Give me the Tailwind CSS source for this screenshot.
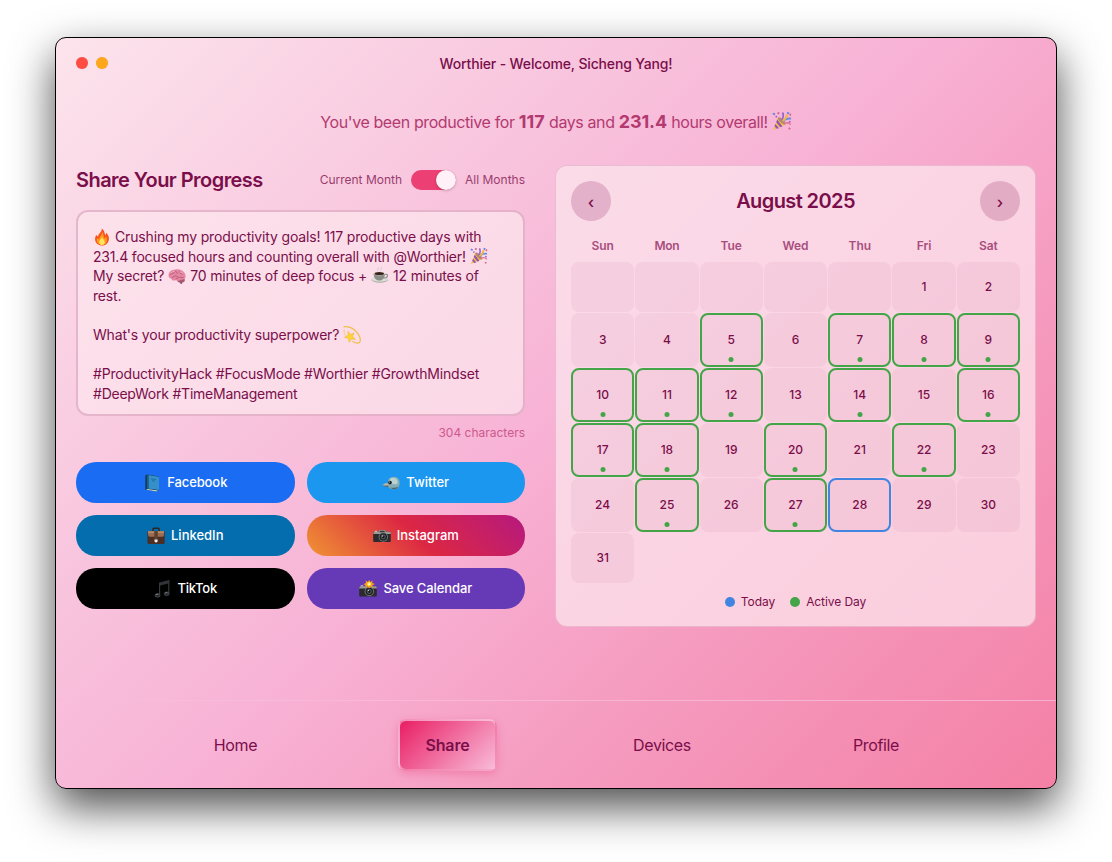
<!DOCTYPE html>
<html lang="en">
<head>
<meta charset="utf-8">
<title>Worthier</title>
<script src="https://cdn.jsdelivr.net/npm/@tailwindcss/browser@4"></script>
</head>
<body class="h-[862px] w-[1112px] overflow-hidden bg-white px-[55px] pt-[37px] font-['Inter',sans-serif] text-[#7a0e4a]">
<svg class="hidden">
  <symbol id="party" viewBox="0 0 20 20">
    <path d="M1 19 6 6.5Q11 8 13.5 13.5Z" fill="#f6bd42"/>
    <path d="M3.4 13 7 17.2 4.8 17.8 2.5 15.3ZM5.2 8.6 10.4 15.4 8.4 16.3 4.2 11.2Z" fill="#9252bd"/>
    <ellipse cx="9.8" cy="10" rx="1.9" ry="5" transform="rotate(-46 9.8 10)" fill="#b98a6a"/>
    <path d="M9.5 9.5Q12.5 5.5 10.5 1.5" stroke="#9465d0" stroke-width="1.8" fill="none"/>
    <path d="M11 10.5Q13 7 19 7.5" stroke="#5f8de8" stroke-width="1.9" fill="none"/>
    <path d="M10.5 9.8Q15 7.5 14.8 3.5" stroke="#f0b73a" stroke-width="1.9" fill="none"/>
    <path d="M12.5 12.3Q16 10.8 18.8 13.5" stroke="#e5739c" stroke-width="1.5" fill="none"/>
    <path d="M1 1.7l2.4.8-.7 1.7-2.1-.6zM15.5 .8l2 1-1 1.7-1.8-1z" fill="#5f86e8"/>
    <path d="M6 .8l1.8 1-.8 1.7-1.8-.8zM18 2.3l1.6 1.1-1.2 1.5-1.4-1zM17 16.3l1.7.9-.8 1.5-1.7-.7z" fill="#d9688f"/>
    <path d="M4 4.6l1.4.8-.8 1.4-1.4-.8zM17 9.8l1.8.4-.5 1.5-1.7-.4z" fill="#8b62cf"/>
  </symbol>
  <symbol id="fire" viewBox="0 0 18 18">
    <path d="M8.7.4C12 2.7 11.6 5.7 12.2 7.2 12.8 6.6 13.2 5.5 13 4.6 15.4 7 16.4 9.2 15.8 12 15.1 15.6 12.3 17.6 9 17.6 5.2 17.6 2.4 15.2 2.1 11.8 1.9 9.4 2.8 8 3.4 6.8 3.8 7.8 4.4 8.3 5.2 8.5 4.9 5.4 9.3 4.2 8.7.4Z" fill="#f8521d"/>
    <path d="M9 3.7C11 6 10.2 8.6 11.4 10.2 12.3 9.8 13 9 13 8.2 15 11.8 13.8 16.8 9 17 4.8 16.8 3 13.4 4 10 5 11 6 11 6.6 10.5 6.5 7.8 9.7 6.8 9 3.7Z" fill="#ff9d20"/>
    <path d="M9 9C9.3 11.2 11.8 12 11.8 14.2 11.8 16 10.4 17 9 17S6.3 16 6.3 14.2C6.3 12.2 8.6 11 9 9Z" fill="#ffe45c"/>
  </symbol>
  <symbol id="brain" viewBox="0 0 18 18">
    <path d="M11 13.5 14.3 13 14 17 12.4 16.5Z" fill="#7b4958"/>
    <ellipse cx="13" cy="13" rx="3.8" ry="2.6" fill="#a55870"/>
    <path d="M.6 9C.2 5.4 3.3 2.6 6.6 2.8 10.4 1.3 17.4 3.4 17.6 9.3 17.6 12 15.6 12.9 13 12.8 10 14.8 8.5 13.5 7.4 13.3 4.7 14.2 3.4 12.7 3.4 11.7 1.8 11.6.8 10.4.6 9Z" fill="#e487a3"/>
    <path d="M2.2 8.3Q3.6 5 6.5 6M4 10.8Q7 7.4 9.8 9.6M6 4Q9.5 4.3 9.5 7M11.5 4Q11.3 7 14.5 7.3M7.7 12Q10.5 9.4 15.7 10.5" stroke="#b65473" stroke-width=".8" fill="none"/>
    <path d="M3 6Q5 3.6 7 4.4M11.8 5Q14 5 15 6.3" stroke="#f8b9cb" stroke-width=".7" fill="none"/>
  </symbol>
  <symbol id="coffee" viewBox="0 0 18 18">
    <path d="M7 4.8Q5.8 3.4 7 2.2T7 0M10 4.8Q8.8 3.4 10 2.2T10 0" stroke="#d9c7d0" stroke-width=".9" fill="none"/>
    <ellipse cx="8.8" cy="12.8" rx="8.4" ry="2.9" fill="#a8aba4"/>
    <ellipse cx="8.8" cy="12.3" rx="8.2" ry="2.5" fill="#dcddd7"/>
    <path d="M2.6 6.2H14C14 10.5 12 13.5 8.3 13.5S2.6 10.5 2.6 6.2Z" fill="#8b8e88"/>
    <path d="M14 7.5Q17 6.8 16.5 9T12.5 11" stroke="#939790" stroke-width="1.2" fill="none"/>
    <ellipse cx="8.3" cy="6.3" rx="5.8" ry="2" fill="#e7e8e2"/>
    <ellipse cx="8.3" cy="6.5" rx="4.8" ry="1.6" fill="#3c2119"/>
  </symbol>
  <symbol id="dizzy" viewBox="0 0 18 18">
    <path d="M.5.8Q9-.5 15 7.7 18.7 13.4 16.5 16.6 14 18.2 9.5 15.2" stroke="#efbf45" stroke-width="1.2" fill="none"/>
    <path d="M1 3.5Q.5 8 3.5 11" stroke="#f4cf6c" stroke-width=".9" fill="none"/>
    <path d="M4.9 5.2 7.3 8.2 11.2 7 9.7 10.3 12.6 13.4 8.6 13.1 6.2 16.5 5.4 12.6 1.4 11.4 5 9.4Z" fill="#ffd339" stroke="#e7a82b" stroke-width=".4"/>
  </symbol>
  <symbol id="book" viewBox="0 0 18 18">
    <path d="M2.3 1.5 4.3.6 16 2.6V16L13.6 17.6 2.3 15.8Z" fill="#143b57"/>
    <path d="M4.5 15 15 16.6 13.6 17.4 3 15.8Z" fill="#cad4d7"/>
    <path d="M4.6.9 16 2.8V16L4.6 14.5Z" fill="#3590c9"/>
    <path d="M4.6.9 6 1.1V14.7L4.6 14.5Z" fill="#1c6696"/>
    <path d="M8 4.8 13 5.6M9 6.7 12 7.2" stroke="#19628f" stroke-width=".7"/>
  </symbol>
  <symbol id="bird" viewBox="0 0 18 18">
    <path d="M.3 11.3Q3.5 8 7.3 9.2L7 12.5Q3.5 12.9.3 11.3Z" fill="#b8b6a9"/>
    <path d="M.3 11.3Q4 12 7.2 11.2L7 13Q3 13.2.3 11.3Z" fill="#535b5a"/>
    <path d="M5.8 9Q6 2.7 12 2.8 17.6 3.3 17.7 9 17.5 15.4 11.8 15.5 7.2 15.4 5.8 11.6Z" fill="#86adb5"/>
    <path d="M8 5Q11 2.6 14.5 5 16.5 8 15 10 11 11 8 8.5Z" fill="#b9d1cf"/>
    <circle cx="8" cy="8.6" r="1.8" fill="#131b20"/><circle cx="7.5" cy="8" r=".5" fill="#fff"/>
    <path d="M8.3 13.5Q13 14.6 16.7 12.3 15 15.4 12 15.4 10 15.4 8.3 13.5Z" fill="#4f6b72"/>
  </symbol>
  <symbol id="case" viewBox="0 0 18 18">
    <path d="M6 4.5V2.4Q6 1.3 7.2 1.3H11Q12.2 1.3 12.2 2.4V4.5" stroke="#33231f" stroke-width="1.4" fill="none"/>
    <rect x=".4" y="4" width="17.3" height="13" rx="1.3" fill="#4b2f27"/>
    <path d="M1 4.3H17Q17.6 9.2 15.6 9.8H2.6Q.4 9.2 1 4.3Z" fill="#9a6d52"/>
    <path d="M1 4.3H17L16.8 6H1.1Z" fill="#b98b69"/>
    <path d="M7.3 4H10.8V12.5H7.3Z" fill="#60402f"/>
    <path d="M7.5 12.5H10.6V14.6L9 15.8 7.5 14.6Z" fill="#f1f1e9"/>
  </symbol>
  <symbol id="camera" viewBox="0 0 18 18">
    <path d="M1.5 4.7H5.5L6.4 3H12L13 4.7H17Q17.8 4.7 17.8 5.5V14.2Q17.8 15 17 15H1Q.2 15 .2 14.2V5.8Q.2 4.8 1.5 4.7Z" fill="#2b2b2d"/>
    <path d="M1.3 4.7H5.5L6.4 3H12L13 4.7H17L17.8 5.5V7H.2V5.8Z" fill="#9b9a96"/>
    <path d="M7 3.7H11.4L11.8 5.2H6.5Z" fill="#353535"/>
    <rect x="1.7" y="3.8" width="2.5" height="1" fill="#d3d2cd"/>
    <circle cx="10.3" cy="10" r="4.7" fill="#777a7a"/><circle cx="10.3" cy="10" r="3.8" fill="#202225"/>
    <circle cx="10.3" cy="10" r="2.4" fill="#596063"/><circle cx="10.3" cy="10" r="1.4" fill="#171a1d"/>
    <circle cx="9.5" cy="9" r=".7" fill="#b7c1c6"/>
  </symbol>
  <symbol id="flash" viewBox="0 0 18 18">
    <use href="#camera" y="1.5" width="18" height="18"/>
    <path d="M10.2-.2 11.3 2 13.6.6 13.2 3.1 16 4 13.3 5.2 13.8 7.7 11.4 6.5 10 8.5 8.8 6.5 6.3 7.7 7 5.2 4.3 4.2 7 3 6.6.5 9 2Z" fill="#ff9d17"/>
    <circle cx="10.1" cy="4.1" r="2" fill="#ffe45b"/><circle cx="10.1" cy="4.1" r=".9" fill="#fff"/>
  </symbol>
  <symbol id="note" viewBox="0 0 18 18">
    <path d="M6.6 15V3.2L15.8.8V13.5" stroke="#3a3e42" stroke-width="1.1" fill="none"/>
    <path d="M6.3 2.8 16.2.5V3.3L6.3 5.7Z" fill="#303438"/>
    <ellipse cx="4.5" cy="15.4" rx="2.5" ry="1.8" fill="#272b2f" stroke="#596067" stroke-width=".6"/>
    <ellipse cx="13.7" cy="13.8" rx="2.5" ry="1.8" fill="#272b2f" stroke="#596067" stroke-width=".6"/>
    <path d="M3 14.8Q4 13.8 5.2 14.4M12.2 13.2Q13.3 12.2 14.4 12.8" stroke="#adb4b9" stroke-width=".6" fill="none"/>
  </symbol>
</svg>

<div class="flex h-[752px] w-[1002px] flex-col overflow-hidden rounded-[11px] border border-black bg-[linear-gradient(135deg,#fce4ec_0%,#f8c1dc_35%,#f8b2d5_50%,#f59cc0_70%,#f480a5_100%)] shadow-[0_18px_44px_rgba(0,0,0,0.7)]">
  <header class="flex h-[52px] shrink-0 items-center px-5">
    <div class="flex w-[120px] gap-2 pb-0.5">
      <span class="size-3 rounded-full bg-[#ff4d43] shadow-[0_0_1px_rgba(0,0,0,0.15)]"></span>
      <span class="size-3 rounded-full bg-[#ffa71a] shadow-[0_0_1px_rgba(0,0,0,0.15)]"></span>
    </div>
    <h1 class="flex-1 text-center text-sm font-medium tracking-[-0.15px]">Worthier - Welcome, Sicheng Yang!</h1>
    <div class="w-[120px]"></div>
  </header>

  <p class="mt-[18px] mb-px flex h-[26px] shrink-0 items-center justify-center text-[#b33a70]">
    <span class="text-base tracking-[-0.4px] whitespace-pre">You've been productive for <b class="text-[18px] tracking-[0.1px]">117</b> days and <b class="text-[18px] tracking-[-0.1px]">231.4</b> hours overall!</span>
    <svg class="ml-1 size-5"><use href="#party"/></svg>
  </p>

  <main class="flex h-[565px] shrink-0 gap-[30px] px-5 pt-[30px]">
    <section class="w-[449px]">
      <div class="flex h-[30px] items-center">
        <h2 class="flex-1 text-xl font-semibold tracking-[-0.55px]">Share Your Progress</h2>
        <div class="flex items-center text-xs text-[#9a3d6e]">
          <span>Current Month</span>
          <span class="mx-[9px] flex h-5 w-[45px] justify-end rounded-full bg-[#ec3f74]"><span class="size-5 rounded-full bg-[#fff1f7] shadow-[0_1px_3px_rgba(0,0,0,0.2)]"></span></span>
          <span>All Months</span>
        </div>
      </div>
      <div class="mt-[15px] h-[206px] rounded-xl border-2 border-[#880e4f]/20 bg-[#fce4ec]/75 px-[15px] pt-[15px] text-sm leading-[19.6px] tracking-[-0.18px]">
        <div class="flex h-[19.6px] items-center"><svg class="mr-1 size-[18px]"><use href="#fire"/></svg><span class="tracking-[-0.15px]">Crushing my productivity goals! 117 productive days with</span></div>
        <div class="flex h-[19.6px] items-center"><span>231.4 focused hours and counting overall with @Worthier!</span><svg class="ml-1 size-[18px]"><use href="#party"/></svg></div>
        <div class="flex h-[19.6px] items-center"><span>My secret?</span><svg class="mx-1 size-[18px]"><use href="#brain"/></svg><span>70 minutes of deep focus +</span><svg class="mx-1 size-[18px]"><use href="#coffee"/></svg><span>12 minutes of</span></div>
        <div class="h-[39.2px]">rest.</div>
        <div class="flex h-[19.6px] items-center"><span>What's your productivity superpower?</span><svg class="ml-1 size-[18px]"><use href="#dizzy"/></svg></div>
        <div class="mt-[19.6px]">#ProductivityHack #FocusMode #Worthier #GrowthMindset</div>
        <div class="tracking-[-0.23px]">#DeepWork #TimeManagement</div>
      </div>
      <div class="mt-[9px] text-right text-xs leading-4 text-[#cc5a8c]">304 characters</div>
      <div class="mt-[21px] grid grid-cols-2 gap-3 text-[13px] font-medium text-white">
        <div class="flex h-[41px] items-center justify-center gap-1.5 rounded-[20px] bg-[#1a6df2]"><svg class="size-[18px]"><use href="#book"/></svg><span class="tracking-[-0.1px]">Facebook</span></div>
        <div class="flex h-[41px] items-center justify-center gap-1.5 rounded-[20px] bg-[#1c97f0]"><svg class="size-[18px]"><use href="#bird"/></svg><span>Twitter</span></div>
        <div class="flex h-[41px] items-center justify-center gap-1.5 rounded-[20px] bg-[#046dae]"><svg class="size-[18px]"><use href="#case"/></svg><span>LinkedIn</span></div>
        <div class="flex h-[41px] items-center justify-center gap-1.5 rounded-[20px] bg-[linear-gradient(45deg,#f09433_0%,#dc2743_50%,#b5197f_100%)]"><svg class="size-[18px]"><use href="#camera"/></svg><span>Instagram</span></div>
        <div class="flex h-[41px] items-center justify-center gap-1.5 rounded-[20px] bg-black"><svg class="size-[18px]"><use href="#note"/></svg><span class="tracking-[-0.2px]">TikTok</span></div>
        <div class="flex h-[41px] items-center justify-center gap-1.5 rounded-[20px] bg-[#663ab7]"><svg class="size-[18px]"><use href="#flash"/></svg><span class="tracking-[-0.1px]">Save Calendar</span></div>
      </div>
    </section>

    <section class="h-[462px] w-[481px] rounded-xl border border-[#880e4f]/15 bg-[#fce4ec]/75 p-[15px]">
      <div class="flex h-10 items-center justify-between">
        <button class="flex size-10 items-center justify-center rounded-full bg-[#880e4f]/20 pt-0.5 text-base font-medium">‹</button>
        <h2 class="text-xl font-semibold tracking-[-0.6px]">August 2025</h2>
        <button class="flex size-10 items-center justify-center rounded-full bg-[#880e4f]/20 pt-0.5 text-base font-medium">›</button>
      </div>
      <div class="mt-4 grid h-[18px] grid-cols-7 gap-px text-center text-xs leading-[18px] font-semibold text-[#a84e7e]">
        <span>Sun</span><span class="tracking-[-0.3px]">Mon</span><span>Tue</span><span class="tracking-[-0.1px]">Wed</span><span>Thu</span><span>Fri</span><span>Sat</span>
      </div>
      <div id="days" class="mt-[7px] grid grid-cols-7 grid-rows-[50px_54px_54px_54px_54px_50px] gap-px text-xs font-[450]"></div>
      <div class="mt-[11px] flex h-4 items-center justify-center text-xs tracking-[-0.08px]">
        <span class="mr-1.5 size-2.5 rounded-full bg-[#4285e0]"></span><span>Today</span>
        <span class="mr-1.5 ml-[15px] size-2.5 rounded-full bg-[#43a547]"></span><span>Active Day</span>
      </div>
    </section>
  </main>

  <nav class="flex flex-1 border-t border-[#f8bbd9]/80 pt-[18px] text-base tracking-[-0.37px]">
    <a class="ml-[131px] flex h-[52px] w-[97px] items-center justify-center">Home</a>
    <a class="ml-[114px] flex h-[52px] w-[99px] items-center justify-center rounded-lg border-2 border-[#f8bbd9]/60 bg-[linear-gradient(135deg,#e91e63,#f8bbd9)] font-semibold tracking-[-0.15px] shadow-[0_3px_8px_rgba(233,30,99,0.25)]">Share</a>
    <a class="ml-[109px] flex h-[52px] w-[112px] items-center justify-center">Devices</a>
    <a class="ml-[108px] flex h-[52px] w-[100px] items-center justify-center">Profile</a>
  </nav>
</div>
<script>
  const active = new Set([5, 7, 8, 9, 10, 11, 12, 14, 16, 17, 18, 20, 22, 25, 27]);
  const today = 28, firstWeekday = 5;
  const grid = document.getElementById('days');
  for (let i = 0; i < firstWeekday + 31; i++) {
    const day = i - firstWeekday + 1;
    const cell = document.createElement('div');
    cell.className = 'relative flex items-center justify-center rounded-lg bg-[#880e4f]/5';
    if (day > 0) cell.textContent = day;
    if (day === today) cell.className += ' border-2 border-[#4285e0]';
    if (active.has(day)) {
      cell.className += ' border-2 border-[#43a547]';
      const dot = document.createElement('span');
      dot.className = 'absolute bottom-[3px] left-1/2 size-[5px] -translate-x-1/2 rounded-full bg-[#43a547]';
      cell.append(dot);
    }
    grid.append(cell);
  }
</script>
</body>
</html>
